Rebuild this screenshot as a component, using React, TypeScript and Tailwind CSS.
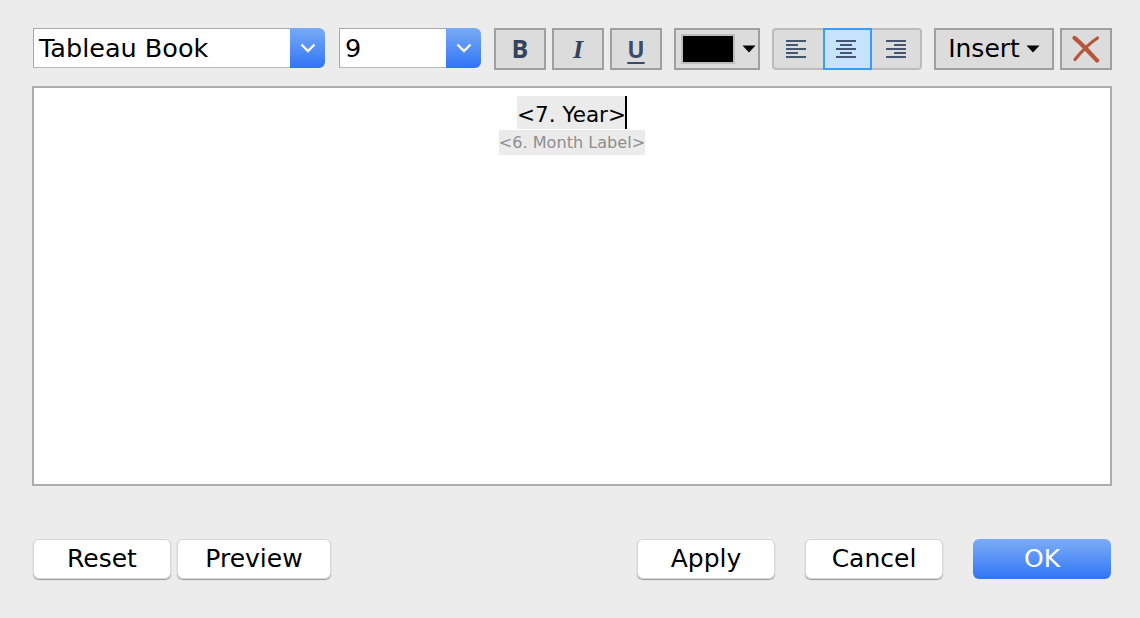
import React from "react";

const Chevron = () => (
  <svg width="16" height="10" viewBox="0 0 16 10" fill="none">
    <path d="M1.5 1.5 L8 8 L14.5 1.5" stroke="white" strokeWidth="2.3" />
  </svg>
);

const Caret = () => (
  <svg width="14" height="8" viewBox="0 0 14 8">
    <path d="M0.5 0.5 H13.5 L7 7.5 Z" fill="black" />
  </svg>
);

const AlignIcon = ({ kind }: { kind: "left" | "center" | "right" }) => {
  const widths = [20, 12, 20, 12, 20];
  return (
    <svg width="20" height="18" viewBox="0 0 20 18">
      {widths.map((w, i) => {
        const x = kind === "left" ? 0 : kind === "center" ? (20 - w) / 2 : 20 - w;
        return <rect key={i} x={x} y={i * 4} width={w} height="2" fill="#46566f" />;
      })}
    </svg>
  );
};

const Select = ({ value, className }: { value: string; className: string }) => (
  <div className={`flex h-10 ${className}`}>
    <div className="flex-1 flex items-center pl-[5px] bg-white border border-r-0 border-[#a8a8a8] border-b-[#b8b8b8] text-[25.5px] text-black">
      {value}
    </div>
    <div className="w-[35px] flex items-center justify-center rounded-r-md bg-gradient-to-b from-[#78aaf5] to-[#2f74f5]">
      <Chevron />
    </div>
  </div>
);

const ToolButton = ({ className, children }: { className: string; children: React.ReactNode }) => (
  <div className={`h-[42px] flex items-center justify-center bg-[#dcdcdc] border-2 border-[#9f9f9f] ${className}`}>
    {children}
  </div>
);

const DialogButton = ({ label, className, primary }: { label: string; className: string; primary?: boolean }) =>
  primary ? (
    <div className={`h-10 flex items-center justify-center rounded-md text-white text-[25px] bg-gradient-to-b from-[#7cacf6] to-[#2f74f5] ${className}`}>
      {label}
    </div>
  ) : (
    <div className={`h-10 flex items-center justify-center rounded-md bg-white text-black text-[25px] shadow-[0_1px_1px_rgba(0,0,0,0.35)] border border-[#d6d6d6] ${className}`}>
      {label}
    </div>
  );

export default function App() {
  return (
    <div
      className="w-[1140px] h-[618px] bg-[#ececec] overflow-hidden flex flex-col pl-[32px] pt-[28px] pr-[28px]"
      style={{ fontFamily: '"DejaVu Sans", sans-serif' }}
    >
      <div className="flex items-start h-[42px] pl-px">
        <Select value="Tableau Book" className="w-[292px]" />
        <Select value="9" className="w-[142px] ml-[14px]" />
        <ToolButton className="w-[52px] ml-[13px] text-[#34435c] text-[25px] font-bold font-['Open_Sans']">B</ToolButton>
        <ToolButton className="w-[52px] ml-[6px] text-[#34435c] text-[26px] font-bold italic font-['Liberation_Serif']">I</ToolButton>
        <ToolButton className="w-[52px] ml-[6px]">
          <span className="text-[#3d4c66] text-[23px] font-bold font-['Open_Sans'] underline underline-offset-[4px] decoration-2">U</span>
        </ToolButton>
        <ToolButton className="w-[86px] ml-[12px] gap-[7px] pl-[3px]">
          <span className="w-[54px] h-[30px] bg-black border-[2px] border-[#bdbdbd] block" />
          <Caret />
        </ToolButton>
        <div className="flex ml-[12px] h-[42px]">
          <div className="w-[51px] pr-[5px] flex items-center justify-center bg-[#dcdcdc] border-2 border-r-0 border-[#bcbcbc] rounded-l-sm">
            <AlignIcon kind="left" />
          </div>
          <div className="w-[49px] pr-[3px] flex items-center justify-center bg-[#c6e2fd] border-2 border-[#3a9bfa]">
            <AlignIcon kind="center" />
          </div>
          <div className="w-[50px] flex items-center justify-center bg-[#dcdcdc] border-2 border-l-0 border-[#bcbcbc] rounded-r-sm">
            <AlignIcon kind="right" />
          </div>
        </div>
        <ToolButton className="w-[120px] ml-[12px] gap-[6px] text-[25px] text-black">
          Insert
          <Caret />
        </ToolButton>
        <ToolButton className="w-[52px] ml-[6px]">
          <svg width="28" height="28" viewBox="0 0 28 28" fill="none">
            <path d="M2.5 3 C8 7 18 18 25 25.5" stroke="#b6563a" strokeWidth="4.2" strokeLinecap="round" />
            <path d="M25.5 3 C18 8 9 17 3 24.5" stroke="#b6563a" strokeWidth="3.2" strokeLinecap="round" />
          </svg>
        </ToolButton>
      </div>

      <div className="mt-4 w-[1080px] h-[400px] bg-white border-2 border-[#adadad] flex flex-col items-center pt-[8px]">
        <div className="flex items-stretch h-[33px]">
          <span className="bg-[#ebebeb] text-black text-[21.5px] pt-1 leading-[29px]">&lt;7. Year&gt;</span>
          <span className="w-[2px] -ml-px bg-black" />
        </div>
        <span className="mt-px pt-px h-[25px] bg-[#ebebeb] text-[#8e8e8e] text-[16.1px] leading-[24px]">&lt;6. Month Label&gt;</span>
      </div>

      <div className="flex mt-[53px] pl-px">
        <DialogButton label="Reset" className="w-[138px]" />
        <DialogButton label="Preview" className="w-[154px] ml-[6px]" />
        <DialogButton label="Apply" className="w-[138px] ml-[306px]" />
        <DialogButton label="Cancel" className="w-[138px] ml-[30px]" />
        <DialogButton label="OK" className="w-[138px] ml-[30px]" primary />
      </div>
    </div>
  );
}
